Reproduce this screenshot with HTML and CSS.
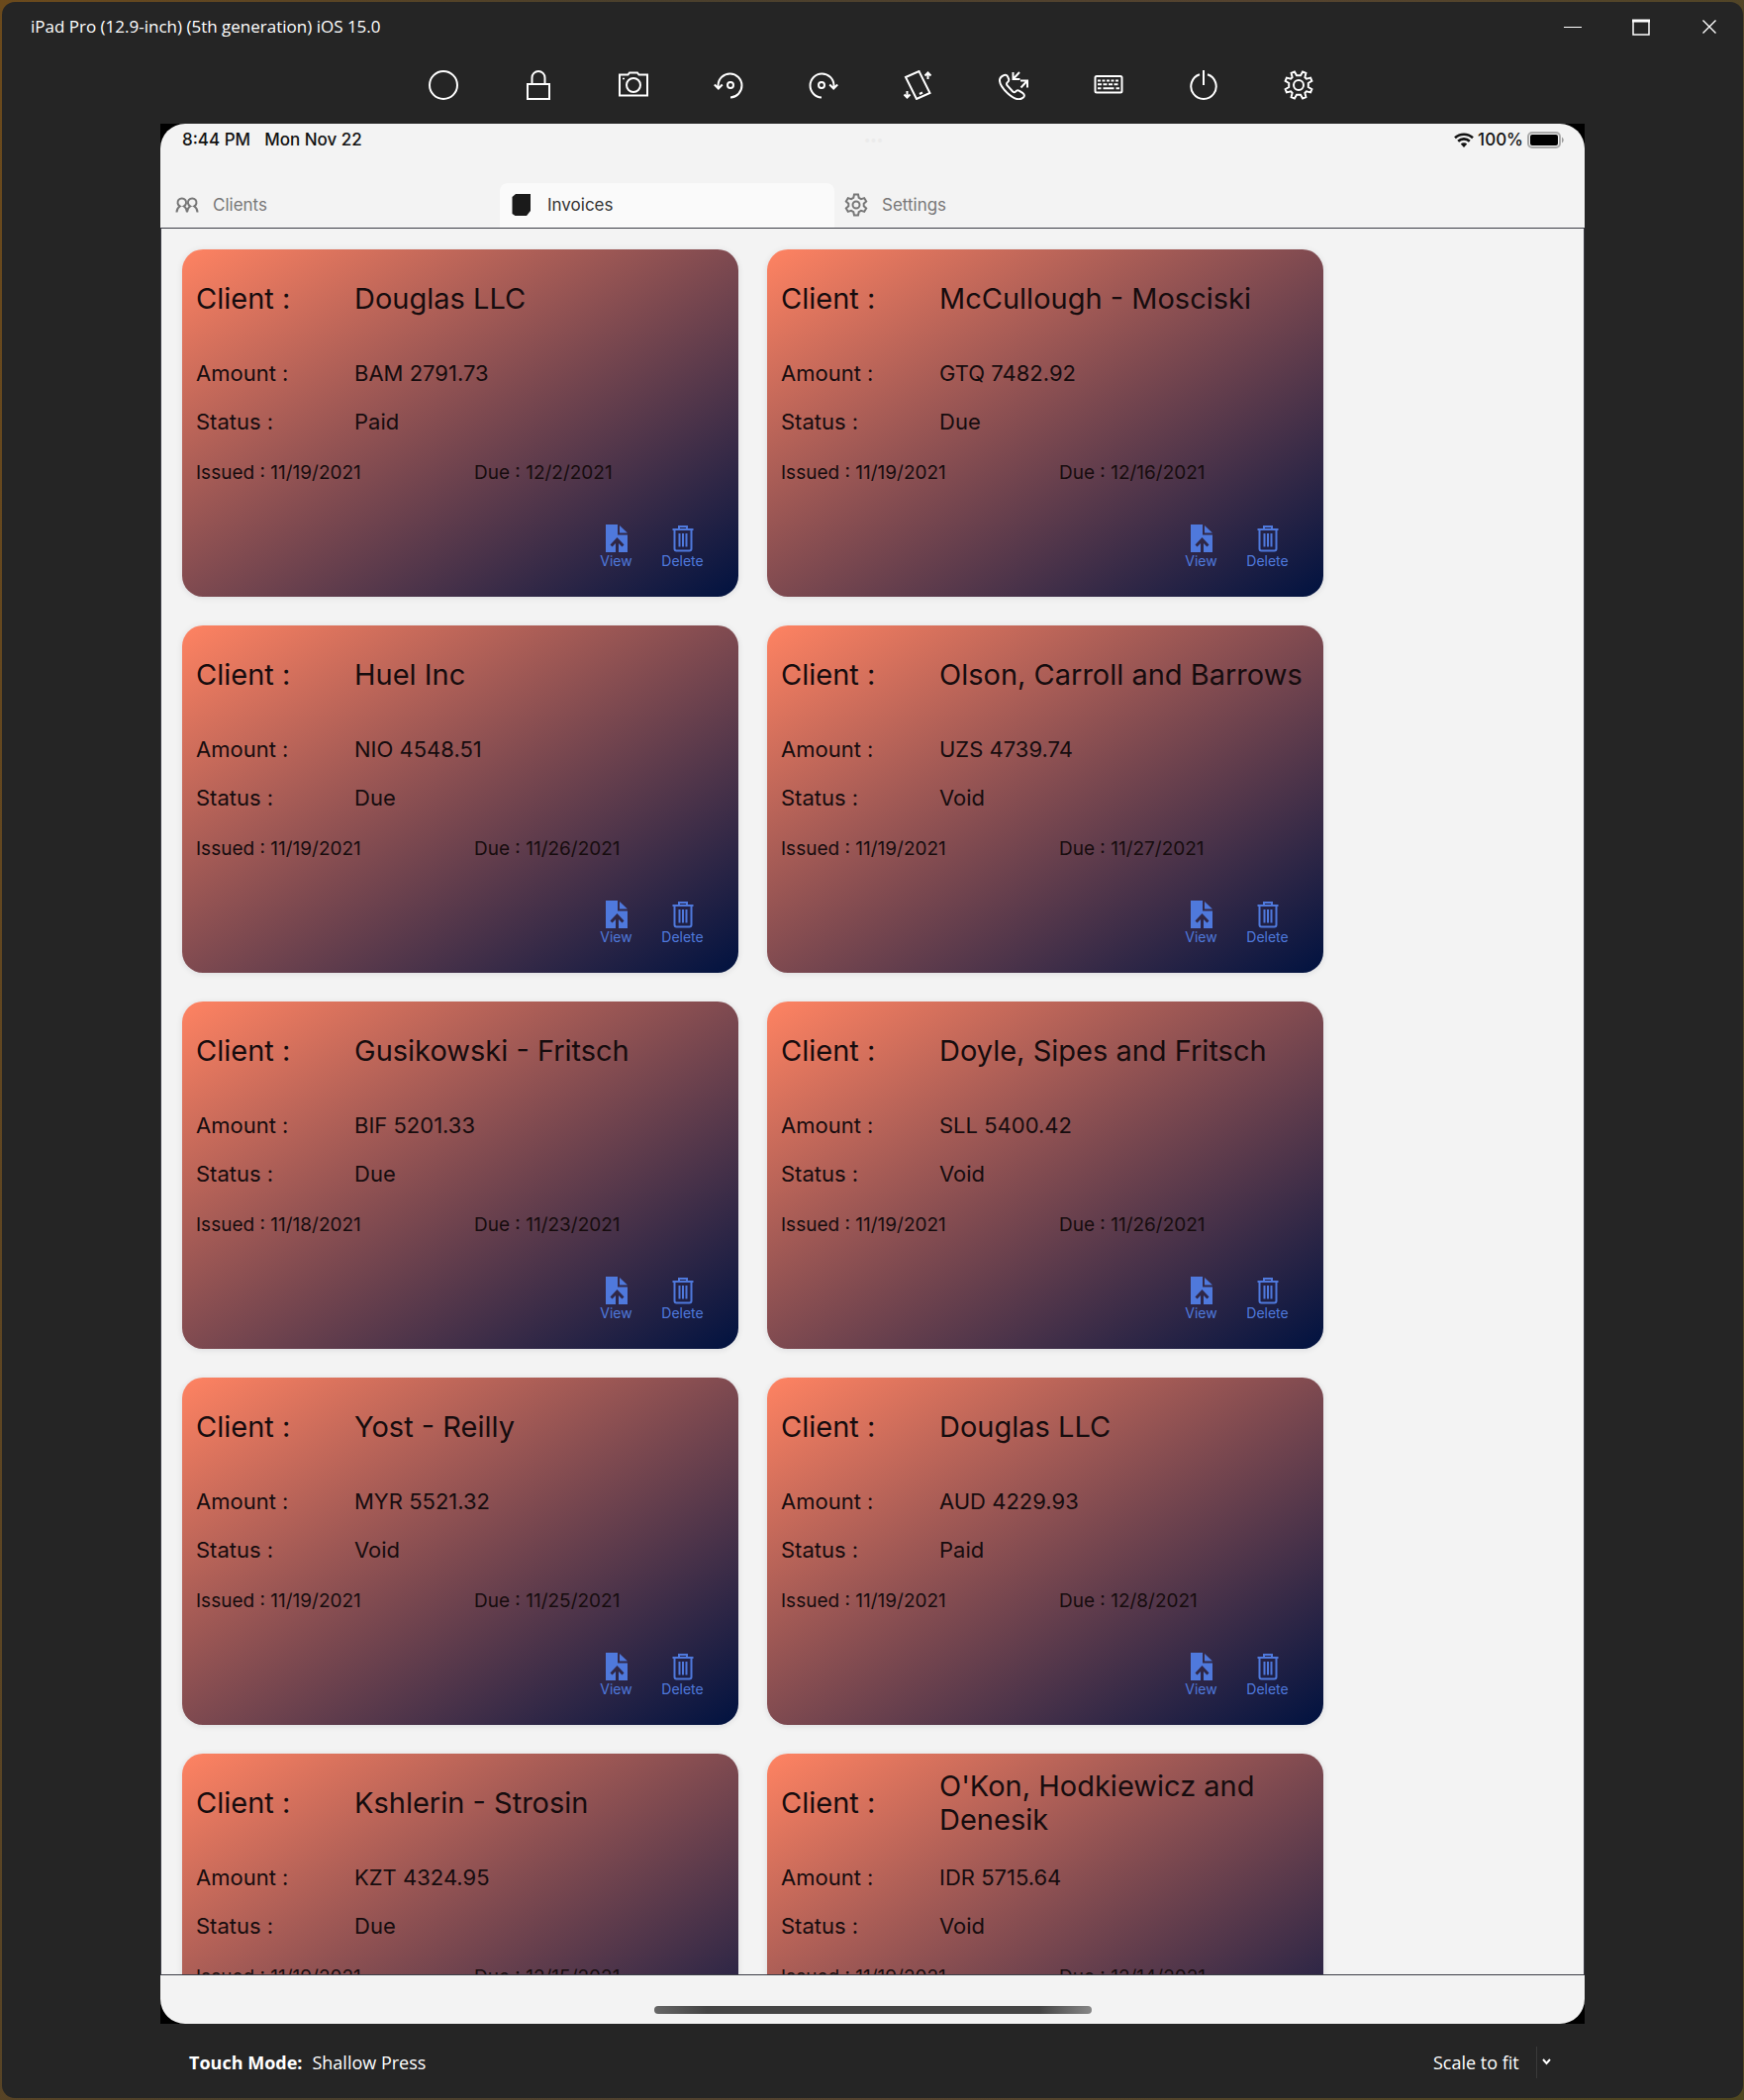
FILE: index.html
```html
<!DOCTYPE html>
<html lang="en">
<head>
<meta charset="utf-8">
<title>iPad Pro (12.9-inch) (5th generation) iOS 15.0</title>
<link rel="stylesheet" href="styles.css">
</head>
<body>
<svg class="sprite" aria-hidden="true">
  <symbol id="i-view" viewBox="0 0 24 28">
    <path fill="currentColor" fill-rule="evenodd" d="M1 0h12v10.500h10V28h-9v-9l3.500 3.500 2-2L12.500 13l-7 7.500 2 2L11 19v9H1z"/>
    <path fill="currentColor" d="M15 1l8 7.500h-8z"/>
  </symbol>
  <symbol id="i-delete" viewBox="0 0 24 28">
    <g fill="none" stroke="currentColor" stroke-width="2">
      <path d="M1.500 5h21M8 4.500V2h8v2.500M3.500 5v19.500a2 2 0 0 0 2 2h13a2 2 0 0 0 2-2V5M8.500 9v13.500M12 9v13.500M15.500 9v13.500"/>
    </g>
  </symbol>
</svg>
<div class="window">
  <header class="titlebar">
    <h1 class="title">iPad Pro (12.9-inch) (5th generation) iOS 15.0</h1>
    <div class="window-controls">
      <button type="button" aria-label="Minimize"><svg width="18" height="18" viewBox="0 0 18 18"><path d="M0 9.500h18"/></svg></button>
      <button type="button" aria-label="Maximize"><svg width="18" height="18" viewBox="0 0 18 18"><path d="M1 3h16v14H1z" stroke-width="1.500"/><path d="M0 3h18" stroke-width="3"/></svg></button>
      <button type="button" aria-label="Close"><svg width="18" height="18" viewBox="0 0 18 18"><path d="M2.500 2.500l13 13M15.500 2.500l-13 13" stroke-width="1.400"/></svg></button>
    </div>
  </header>

  <div class="toolbar">
    <button type="button" aria-label="Home"><svg viewBox="0 0 30 30"><circle cx="15" cy="15" r="14"/></svg></button>
    <button type="button" aria-label="Lock"><svg viewBox="0 0 30 30"><path d="M4 14h22v15H4zM8.500 14V7.500a6.500 6.500 0 0 1 13 0V14"/></svg></button>
    <button type="button" aria-label="Screenshot"><svg viewBox="0 0 30 30"><path d="M1 4.500h8.500L11 2.500h8l1.500 2H29v21H1z"/><circle cx="15" cy="15" r="7"/><path d="M4 8.500h2" stroke-width="1.500"/></svg></button>
    <button type="button" aria-label="Rotate left"><svg viewBox="0 0 30 30"><path d="M4.500 17v-2A12 12 0 1 1 17 27.500M.8 14.500l4 4 4-4"/><circle cx="17" cy="15" r="3"/></svg></button>
    <button type="button" aria-label="Rotate right"><svg viewBox="0 0 30 30"><path d="M25.500 17v-2A12 12 0 1 0 13 27.500M21.200 14.500l4 4 4-4"/><circle cx="13" cy="15" r="3"/></svg></button>
    <button type="button" aria-label="Shake"><svg viewBox="0 0 30 30"><path d="M2 7l13.500-6L26.500 23 13 29zM16 24l3-1.500"/><path d="M24.500 9V3M21.500 5.500l3-3 3 3M3.500 21v6M.5 24.500l3 3 3-3"/></svg></button>
    <button type="button" aria-label="Phone call"><svg viewBox="0 0 30 30"><path d="M5 5.200c1.800-1 3.500-.2 4.200 1.400l1 2.400c.4 1.500-.2 2.400-1.600 3.500-.8.800-.7 1.700-.1 2.700l5.700 6.300c1 .8 2 .9 2.800.1 1-1.200 2.200-1.700 3.500-1l4 2.600c1.700 1.200 1.800 3 .3 4.400-3.800 3.300-10 .8-15.500-4.200C3.500 18 .6 13.500 1 9.500c.2-2 2-3.300 4-4.300z"/><path d="M21 2l-6 6.500M14.500 2v7h7M22.500 17.500l6-6.500M22 10.500h7v7"/></svg></button>
    <button type="button" aria-label="Keyboard"><svg viewBox="0 0 30 30"><rect x="1.500" y="6" width="27" height="16.500" rx="1.500"/><path d="M4 10.500h22" stroke-dasharray="3 1.500"/><path d="M4 14.300h22" stroke-dasharray="4 1.500"/><path d="M4 18.200h3.500M9.500 18.200h11M22.500 18.200H26"/></svg></button>
    <button type="button" aria-label="Power"><svg viewBox="0 0 30 30"><path d="M15 0v15M11 4.200a12.700 12.700 0 1 0 8 0"/></svg></button>
    <button type="button" aria-label="Settings"><svg viewBox="0 0 30 30"><circle cx="15" cy="15" r="5"/><path d="M10.900 1.600L13 5.200h4l2.100-3.600 3.300 1.300-1 4.200 1.500 1.500 4.200-1 1.300 3.300L24.800 13v4l3.600 2.100-1.300 3.300-4.200-1-1.500 1.500 1 4.200-3.300 1.300L17 24.800h-4l-2.100 3.600-3.300-1.300 1-4.200-1.500-1.500-4.200 1-1.300-3.300L5.200 17v-4l-3.600-2.100 1.300-3.300 4.200 1 1.500-1.500-1-4.200z"/></svg></button>
  </div>

  <div class="bezel">
    <main class="screen">
      <div class="statusbar">
        <div class="clock"><span>8:44 PM</span><span>Mon Nov 22</span></div>
        <div class="multitask">•••</div>
        <div class="power">
          <svg width="20" height="15" viewBox="0 0 20 15" aria-hidden="true"><g fill="none" stroke="#111" stroke-width="2.600"><path d="M1 5.300a13 13 0 0 1 18 0M4.200 8.700a8.400 8.400 0 0 1 11.600 0"/></g><path d="M10 15l-3.200-3.400a4.600 4.600 0 0 1 6.400 0z" fill="#111"/></svg>
          <span>100%</span>
          <svg width="38" height="17" viewBox="0 0 38 17" aria-hidden="true"><rect x="1" y="1" width="32" height="15" rx="4" fill="none" stroke="#aaa" stroke-width="2"/><rect x="3" y="3" width="28" height="11" rx="2"/><path d="M35 5.500a3.500 3.500 0 0 1 0 6z" fill="#999"/></svg>
        </div>
      </div>

      <nav class="tabs">
        <a class="tab" href="#clients"><svg viewBox="0 0 24 24"><path d="M1.500 19.500c0-3 1.300-4.800 3.300-6a4.300 4.300 0 1 1 4 0c2 1.200 3.200 3 3.200 6 0-3 1.200-4.800 3.200-6a4.300 4.300 0 1 1 4 0c2 1.200 3.300 3 3.300 6"/></svg>Clients</a>
        <a class="tab selected" href="#invoices" aria-current="page"><svg viewBox="0 0 24 24"><path class="solid" d="M6 1h15v17l-4 5H5.500L2.500 21V4z"/></svg>Invoices</a>
        <a class="tab" href="#settings"><svg viewBox="0 0 24 24"><circle cx="12" cy="12" r="3.500"/><path d="M10 1.500h4l.7 3.300 2.300 1.300 3.200-1 2 3.500-2.500 2.200v2.400l2.500 2.200-2 3.500-3.200-1-2.300 1.300-.7 3.300h-4l-.7-3.300L7 17.900l-3.200 1-2-3.500 2.500-2.200v-2.400L1.800 8.600l2-3.500 3.200 1 2.300-1.300z"/></svg>Settings</a>
      </nav>

      <section class="invoices">
        <article class="card">
          <h2 class="row client"><span>Client :</span><span>Douglas LLC</span></h2>
          <p class="row"><span>Amount :</span><span>BAM 2791.73</span></p>
          <p class="row"><span>Status :</span><span>Paid</span></p>
          <p class="row dates"><span>Issued : 11/19/2021</span><span>Due : 12/2/2021</span></p>
          <div class="actions"><button type="button"><svg><use href="#i-view"/></svg>View</button><button type="button"><svg><use href="#i-delete"/></svg>Delete</button></div>
        </article>
        <article class="card">
          <h2 class="row client"><span>Client :</span><span>McCullough - Mosciski</span></h2>
          <p class="row"><span>Amount :</span><span>GTQ 7482.92</span></p>
          <p class="row"><span>Status :</span><span>Due</span></p>
          <p class="row dates"><span>Issued : 11/19/2021</span><span>Due : 12/16/2021</span></p>
          <div class="actions"><button type="button"><svg><use href="#i-view"/></svg>View</button><button type="button"><svg><use href="#i-delete"/></svg>Delete</button></div>
        </article>
        <article class="card">
          <h2 class="row client"><span>Client :</span><span>Huel Inc</span></h2>
          <p class="row"><span>Amount :</span><span>NIO 4548.51</span></p>
          <p class="row"><span>Status :</span><span>Due</span></p>
          <p class="row dates"><span>Issued : 11/19/2021</span><span>Due : 11/26/2021</span></p>
          <div class="actions"><button type="button"><svg><use href="#i-view"/></svg>View</button><button type="button"><svg><use href="#i-delete"/></svg>Delete</button></div>
        </article>
        <article class="card">
          <h2 class="row client"><span>Client :</span><span>Olson, Carroll and Barrows</span></h2>
          <p class="row"><span>Amount :</span><span>UZS 4739.74</span></p>
          <p class="row"><span>Status :</span><span>Void</span></p>
          <p class="row dates"><span>Issued : 11/19/2021</span><span>Due : 11/27/2021</span></p>
          <div class="actions"><button type="button"><svg><use href="#i-view"/></svg>View</button><button type="button"><svg><use href="#i-delete"/></svg>Delete</button></div>
        </article>
        <article class="card">
          <h2 class="row client"><span>Client :</span><span>Gusikowski - Fritsch</span></h2>
          <p class="row"><span>Amount :</span><span>BIF 5201.33</span></p>
          <p class="row"><span>Status :</span><span>Due</span></p>
          <p class="row dates"><span>Issued : 11/18/2021</span><span>Due : 11/23/2021</span></p>
          <div class="actions"><button type="button"><svg><use href="#i-view"/></svg>View</button><button type="button"><svg><use href="#i-delete"/></svg>Delete</button></div>
        </article>
        <article class="card">
          <h2 class="row client"><span>Client :</span><span>Doyle, Sipes and Fritsch</span></h2>
          <p class="row"><span>Amount :</span><span>SLL 5400.42</span></p>
          <p class="row"><span>Status :</span><span>Void</span></p>
          <p class="row dates"><span>Issued : 11/19/2021</span><span>Due : 11/26/2021</span></p>
          <div class="actions"><button type="button"><svg><use href="#i-view"/></svg>View</button><button type="button"><svg><use href="#i-delete"/></svg>Delete</button></div>
        </article>
        <article class="card">
          <h2 class="row client"><span>Client :</span><span>Yost - Reilly</span></h2>
          <p class="row"><span>Amount :</span><span>MYR 5521.32</span></p>
          <p class="row"><span>Status :</span><span>Void</span></p>
          <p class="row dates"><span>Issued : 11/19/2021</span><span>Due : 11/25/2021</span></p>
          <div class="actions"><button type="button"><svg><use href="#i-view"/></svg>View</button><button type="button"><svg><use href="#i-delete"/></svg>Delete</button></div>
        </article>
        <article class="card">
          <h2 class="row client"><span>Client :</span><span>Douglas LLC</span></h2>
          <p class="row"><span>Amount :</span><span>AUD 4229.93</span></p>
          <p class="row"><span>Status :</span><span>Paid</span></p>
          <p class="row dates"><span>Issued : 11/19/2021</span><span>Due : 12/8/2021</span></p>
          <div class="actions"><button type="button"><svg><use href="#i-view"/></svg>View</button><button type="button"><svg><use href="#i-delete"/></svg>Delete</button></div>
        </article>
        <article class="card">
          <h2 class="row client"><span>Client :</span><span>Kshlerin - Strosin</span></h2>
          <p class="row"><span>Amount :</span><span>KZT 4324.95</span></p>
          <p class="row"><span>Status :</span><span>Due</span></p>
          <p class="row dates"><span>Issued : 11/19/2021</span><span>Due : 12/15/2021</span></p>
        </article>
        <article class="card">
          <h2 class="row client"><span>Client :</span><span>O'Kon, Hodkiewicz and Denesik</span></h2>
          <p class="row"><span>Amount :</span><span>IDR 5715.64</span></p>
          <p class="row"><span>Status :</span><span>Void</span></p>
          <p class="row dates"><span>Issued : 11/19/2021</span><span>Due : 12/14/2021</span></p>
        </article>
      </section>

      <div class="home"><div class="home-bar"></div></div>
    </main>
  </div>

  <footer class="footer">
    <p class="touch"><strong>Touch Mode:</strong><span>Shallow Press</span></p>
    <div class="scale">
      <select aria-label="Zoom"><option>Scale to fit</option></select>
      <svg width="9" height="7" viewBox="0 0 9 7" aria-hidden="true"><path d="M1 1l3.500 4L8 1"/></svg>
    </div>
  </footer>
</div>
</body>
</html>
```
FILE: styles.css
```css
* { box-sizing: border-box; }

body {
  margin: 0;
  height: 100vh;
  padding: 2px 1px 2px 2px;
  background: linear-gradient(100deg, #6b4a1c, #4a3f2c 30%, #55432f 60%, #4f4620);
  font-family: "Open Sans", "Noto Sans", sans-serif;
}

h1, h2, p { margin: 0; font-weight: 400; }
button { border: 0; padding: 0; background: none; color: inherit; font: inherit; cursor: pointer; }
svg { display: block; }
.sprite { display: none; }

.window {
  display: flex;
  flex-direction: column;
  height: 100%;
  border-radius: 13px;
  background: #252525;
  color: #fff;
  overflow: hidden;
}

.titlebar {
  display: flex;
  align-items: center;
  justify-content: space-between;
  height: 50px;
  padding-left: 29px;
}
.title { font-size: 17px; line-height: 24px; }
.window-controls { display: flex; }
.window-controls button { display: grid; place-items: center; width: 69px; height: 50px; }
.window-controls svg { fill: none; stroke: #fff; }

.toolbar {
  display: flex;
  justify-content: center;
  align-items: center;
  gap: 66px;
  height: 73px;
  padding: 0 4px 5px 0;
}
.toolbar button, .toolbar svg { width: 30px; height: 30px; }
.toolbar svg { fill: none; stroke: #fff; stroke-width: 2; }

.bezel {
  flex: 1;
  min-height: 0;
  margin: 0 160px;
  background: #000;
}
.screen {
  display: flex;
  flex-direction: column;
  height: 100%;
  border-radius: 25px;
  background: #f3f3f3;
  color: #111;
  font-family: Inter, sans-serif;
  overflow: hidden;
}

.statusbar {
  display: grid;
  grid-template-columns: 1fr auto 1fr;
  align-items: center;
  height: 32px;
  padding: 0 20px 0 22px;
  font-size: 17px;
  font-weight: 500;
  line-height: 22px;
}
.clock { display: flex; gap: 14px; }
.multitask { color: #ebebeb; font-size: 12px; }
.power { display: flex; align-items: center; justify-content: flex-end; gap: 4px; }

.tabs { display: flex; height: 73px; padding: 28px 5px 0; }
.tab {
  display: flex;
  align-items: center;
  gap: 14px;
  width: 338px;
  padding: 0 0 2px 10px;
  border-radius: 8px 8px 0 0;
  color: #777;
  font-size: 17px;
  line-height: 22px;
  text-decoration: none;
}
.tab svg { width: 24px; height: 24px; fill: none; stroke: #777; stroke-width: 2; }
.tab .solid { fill: #1a1a1a; stroke: none; }
.tab.selected { background: #fafafa; color: #333; }

.invoices {
  flex: 1;
  min-height: 0;
  display: grid;
  grid-template-columns: repeat(auto-fill, 562px);
  grid-auto-rows: 351px;
  gap: 29px;
  padding: 21px;
  border: 1px solid #3c3d46;
  overflow: hidden;
}
.card {
  display: grid;
  grid-template-rows: 100px 49px 50px 54px 1fr;
  padding: 0 14px;
  border-radius: 21px;
  background: linear-gradient(to bottom right, #ff8362, #7f4a50 50%, #001240);
  box-shadow: 0 1px 6px rgba(0, 20, 40, 0.1);
  color: #160c0e;
}
.row {
  display: grid;
  grid-template-columns: 160px 1fr;
  align-items: center;
  font-size: 22px;
  line-height: 28px;
}
.client { font-size: 29px; line-height: 34px; }
.dates { grid-template-columns: 281px 1fr; font-size: 19px; }
.actions {
  display: flex;
  justify-content: flex-end;
  align-items: flex-start;
  padding: 25px 9px 0 0;
}
.actions button {
  display: flex;
  flex-direction: column;
  align-items: center;
  width: 67px;
  color: #4f79dc;
  font-size: 14px;
  line-height: 18px;
}
.actions svg { width: 24px; height: 28px; }

.home { display: flex; justify-content: center; height: 49px; padding-top: 31px; }
.home-bar {
  width: 442px;
  height: 8px;
  border-radius: 4px;
  background: linear-gradient(to right, #666, #444 12%, #444 88%, #888);
}

.footer {
  display: flex;
  justify-content: space-between;
  align-items: center;
  height: 75px;
  padding: 2px 194px 0 189px;
  font-size: 18px;
  line-height: 24px;
}
.touch { display: flex; gap: 10px; }
.scale { display: flex; align-items: center; }
.scale select {
  appearance: none;
  height: 32px;
  margin-right: 5px;
  padding: 0 17px 0 0;
  border: 0;
  border-right: 1px solid #3a3a3a;
  background: none;
  color: #fff;
  font: inherit;
}
.scale svg { fill: none; stroke: #fff; stroke-width: 2; }
```
